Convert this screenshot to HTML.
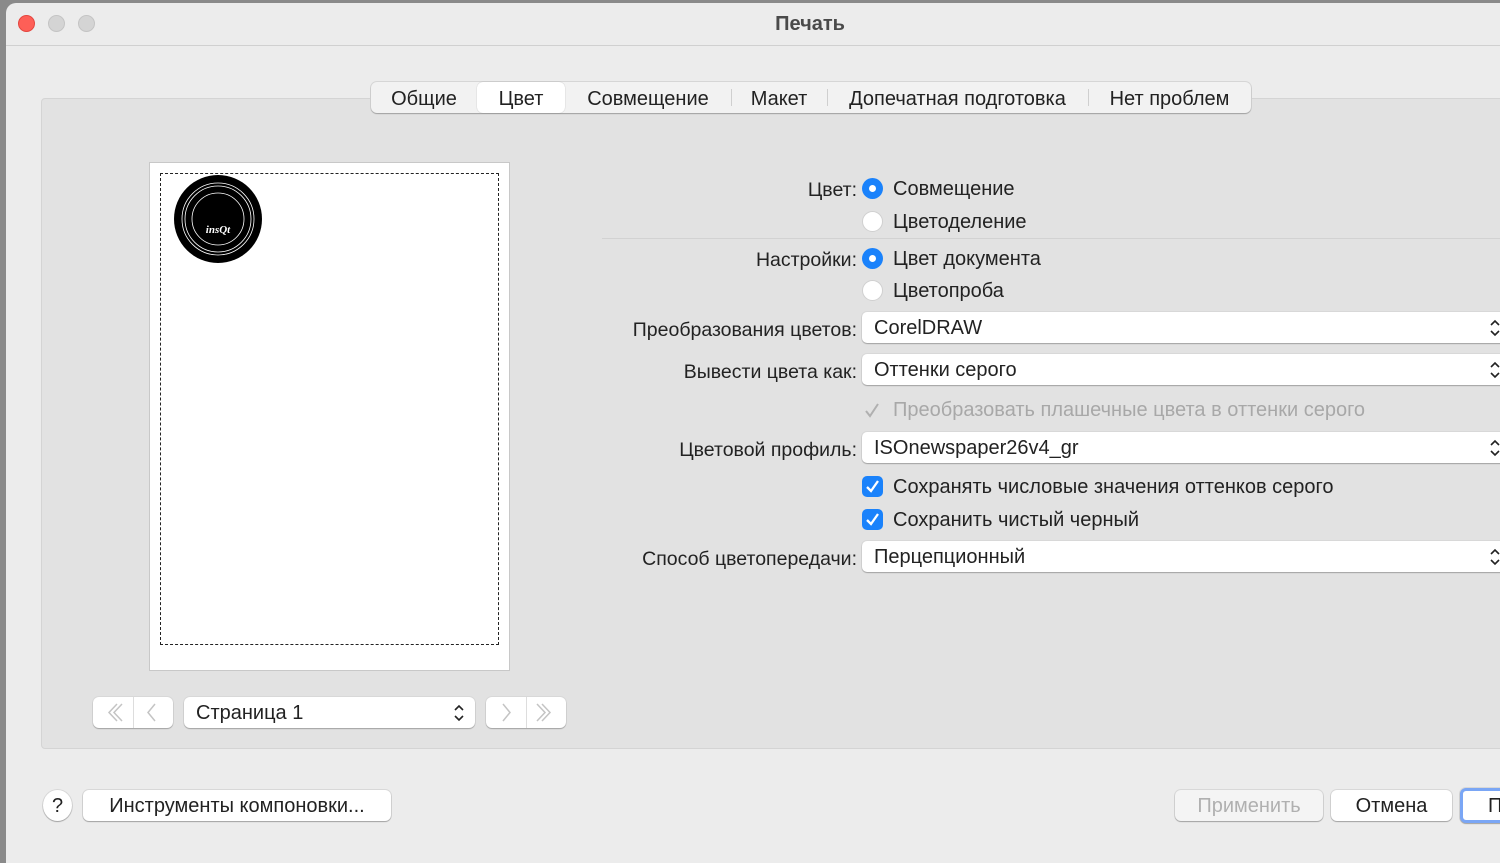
<!DOCTYPE html>
<html><head><meta charset="utf-8"><style>
body{margin:0;width:1500px;height:851px;overflow:hidden;background:#8a8a8a;font-family:"Liberation Sans","Noto Sans CJK SC",sans-serif;color:#222;position:relative}
.win{position:absolute;left:6px;top:3px;width:1500px;height:860px;background:#ececec;border-radius:10px 0 0 0}
.title{position:absolute;left:0;top:0;width:1608px;height:42px;border-bottom:1px solid #d0d0d0;text-align:center;line-height:42px;font-weight:bold;font-size:20px;color:#4a4a4a}
.dot{position:absolute;top:12px;width:17px;height:17px;border-radius:50%;background:#d4d4d4;border:1px solid #c4c4c4;box-sizing:border-box}
.a{position:absolute}
.panel{position:absolute;left:41px;top:98px;width:1470px;height:651px;background:#e2e2e2;border:1px solid #d4d4d4;border-radius:4px;box-sizing:border-box}
.tabs{position:absolute;left:371px;top:82px;height:31px;width:880px;background:#f2f2f2;border-radius:6px;box-shadow:0 1px 1px rgba(0,0,0,.25),0 0 0 1px #d6d6d6;font-size:20px}
.tab{position:absolute;top:0;height:31px;line-height:34px;text-align:center;color:#222}
.sep{position:absolute;top:7px;width:1px;height:17px;background:#cfcfcf}
.lbl{position:absolute;right:643px;font-size:19.5px;white-space:nowrap}
.txt{position:absolute;left:893px;font-size:20px;white-space:nowrap}
.rad{position:absolute;left:862px;width:21px;height:21px;border-radius:50%;box-sizing:border-box}
.on{background:#1a82fb}
.on:after{content:"";position:absolute;left:7px;top:7px;width:7px;height:7px;border-radius:50%;background:#fff}
.off{background:#fff;border:1px solid #d0d0d0}
.pop{position:absolute;left:862px;width:660px;height:31px;background:#fff;border-radius:5px;box-shadow:0 1px 1px rgba(0,0,0,.25),0 0 0 1px #d8d8d8;font-size:20px;line-height:33px;padding-left:12px;box-sizing:border-box}
.pop svg,.pg svg{position:absolute;top:7px}
.cb{position:absolute;left:862px;width:21px;height:21px;border-radius:5px;background:#1a82fb}
.btn{position:absolute;height:31px;background:#fff;border-radius:6px;box-shadow:0 1px 1px rgba(0,0,0,.25),0 0 0 1px #d8d8d8;font-size:20px;line-height:33px;text-align:center}
</style></head><body>
<div class="win">
<div class="title">Печать</div>
<div class="dot" style="left:12px;background:#fe5f57;border-color:#e4463f"></div>
<div class="dot" style="left:42px"></div>
<div class="dot" style="left:72px"></div>
</div>
<div class="panel"></div>
<div class="tabs">
<div class="tab" style="left:0;width:106px">Общие</div>
<div class="tab" style="left:106px;width:88px;background:#fff;border-radius:6px;box-shadow:0 0 1px rgba(0,0,0,.3)">Цвет</div>
<div class="tab" style="left:194px;width:166px">Совмещение</div>
<div class="sep" style="left:360px"></div>
<div class="tab" style="left:360px;width:96px">Макет</div>
<div class="sep" style="left:456px"></div>
<div class="tab" style="left:456px;width:261px">Допечатная подготовка</div>
<div class="sep" style="left:717px"></div>
<div class="tab" style="left:717px;width:163px">Нет проблем</div>
</div>
<div class="a" style="left:149px;top:162px;width:361px;height:509px;background:#fff;border:1px solid #c8c8c8;box-sizing:border-box"></div>
<div class="a" style="left:160px;top:173px;width:339px;height:472px;border:1px dashed #222;box-sizing:border-box"></div>
<svg class="a" style="left:174px;top:175px" width="90" height="90" viewBox="0 0 90 90">
<circle cx="44" cy="44" r="44" fill="#000"/>
<circle cx="44" cy="44" r="36" fill="none" stroke="#fff" stroke-width=".8"/>
<circle cx="44" cy="44" r="33" fill="none" stroke="#fff" stroke-width=".8"/>
<circle cx="44" cy="44" r="26" fill="none" stroke="#fff" stroke-width=".8"/>
<text x="44" y="58" fill="#fff" font-size="11" font-weight="bold" font-style="italic" text-anchor="middle" font-family="Liberation Serif,serif">insQt</text>
</svg>
<div class="a" style="left:602px;top:238px;width:900px;height:1px;background:#d2d2d2"></div>
<div class="lbl" style="top:179px">Цвет:</div>
<div class="rad on" style="top:178px"></div><div class="txt" style="top:178px">Совмещение</div>
<div class="rad off" style="top:211px"></div><div class="txt" style="top:211px">Цветоделение</div>
<div class="lbl" style="top:249px">Настройки:</div>
<div class="rad on" style="top:248px"></div><div class="txt" style="top:248px">Цвет документа</div>
<div class="rad off" style="top:280px"></div><div class="txt" style="top:280px">Цветопроба</div>
<div class="lbl" style="top:319px">Преобразования цветов:</div>
<div class="pop" style="top:312px">CorelDRAW<svg style="left:628px" width="10" height="18"><path d="M1 6L5 2L9 6M1 12L5 16L9 12" fill="none" stroke="#222" stroke-width="1.6"/></svg></div>
<div class="lbl" style="top:361px">Вывести цвета как:</div>
<div class="pop" style="top:354px">Оттенки серого<svg style="left:628px" width="10" height="18"><path d="M1 6L5 2L9 6M1 12L5 16L9 12" fill="none" stroke="#222" stroke-width="1.6"/></svg></div>
<svg class="a" style="left:863px;top:401px" width="20" height="20"><path d="M3 10L7 15L15 3" fill="none" stroke="#b0b0b0" stroke-width="2"/></svg><div class="txt" style="top:399px;color:#a8a8a8">Преобразовать плашечные цвета в оттенки серого</div>
<div class="lbl" style="top:439px">Цветовой профиль:</div>
<div class="pop" style="top:432px">ISOnewspaper26v4_gr<svg style="left:628px" width="10" height="18"><path d="M1 6L5 2L9 6M1 12L5 16L9 12" fill="none" stroke="#222" stroke-width="1.6"/></svg></div>
<div class="cb" style="top:476px"><svg width="21" height="21"><path d="M5 11L9 15L16 5" fill="none" stroke="#fff" stroke-width="2.3"/></svg></div><div class="txt" style="top:476px">Сохранять числовые значения оттенков серого</div>
<div class="cb" style="top:509px"><svg width="21" height="21"><path d="M5 11L9 15L16 5" fill="none" stroke="#fff" stroke-width="2.3"/></svg></div><div class="txt" style="top:509px">Сохранить чистый черный</div>
<div class="lbl" style="top:548px">Способ цветопередачи:</div>
<div class="pop" style="top:541px">Перцепционный<svg style="left:628px" width="10" height="18"><path d="M1 6L5 2L9 6M1 12L5 16L9 12" fill="none" stroke="#222" stroke-width="1.6"/></svg></div>
<div class="btn" style="left:93px;top:697px;width:80px"><svg style="position:absolute;left:0;top:0" width="80" height="31"><path d="M24 7L16 15.5L24 24M29 7L21 15.5L29 24M62 7L55 15.5L62 24" fill="none" stroke="#c4c4c4" stroke-width="1.5"/></svg></div>
<div class="a" style="left:133px;top:697px;width:1px;height:31px;background:#ddd"></div>
<div class="btn pg" style="left:184px;top:697px;width:291px;text-align:left;padding-left:12px;box-sizing:border-box">Страница 1<svg style="left:270px" width="10" height="18"><path d="M1 6L5 2L9 6M1 12L5 16L9 12" fill="none" stroke="#222" stroke-width="1.6"/></svg></div>
<div class="btn" style="left:486px;top:697px;width:80px"><svg style="position:absolute;left:0;top:0" width="80" height="31"><path d="M17 7L24 15.5L17 24M51 7L59 15.5L51 24M56 7L64 15.5L56 24" fill="none" stroke="#c4c4c4" stroke-width="1.5"/></svg></div>
<div class="a" style="left:526px;top:697px;width:1px;height:31px;background:#ddd"></div>
<div class="btn" style="left:43px;top:790px;width:29px;border-radius:50%">?</div>
<div class="btn" style="left:83px;top:790px;width:308px">Инструменты компоновки...</div>
<div class="btn" style="left:1175px;top:790px;width:148px;background:#f4f4f4;color:#b0b0b0">Применить</div>
<div class="btn" style="left:1331px;top:790px;width:121px">Отмена</div>
<div class="btn" style="left:1460px;top:788px;width:60px;border:3px solid #7aa6f5;text-align:left;padding-left:25px;box-sizing:border-box;height:35px;line-height:30px">П</div>
</body></html>
